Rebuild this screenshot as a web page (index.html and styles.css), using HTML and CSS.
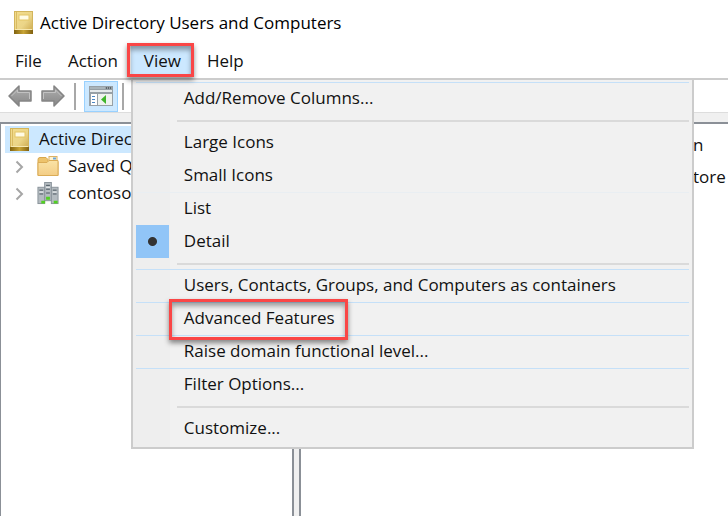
FILE: index.html
```html
<!DOCTYPE html>
<html lang="en">
<head>
<meta charset="utf-8">
<title>Active Directory Users and Computers</title>
<link rel="stylesheet" href="styles.css">
</head>
<body>
<svg class="defs" width="0" height="0" aria-hidden="true">
  <defs>
    <linearGradient id="gold" x1="0" y1="0" x2="1" y2="1">
      <stop offset="0" stop-color="#f3dc8c"/><stop offset=".55" stop-color="#ebd588"/><stop offset="1" stop-color="#c9a548"/>
    </linearGradient>
    <linearGradient id="spine" x1="0" y1="0" x2="1" y2="0">
      <stop offset="0" stop-color="#80620f"/><stop offset=".5" stop-color="#c9a536"/><stop offset="1" stop-color="#806010"/>
    </linearGradient>
    <linearGradient id="steel" x1="0" y1="0" x2="0" y2="1">
      <stop offset="0" stop-color="#b0b0b0"/><stop offset="1" stop-color="#868686"/>
    </linearGradient>
    <linearGradient id="paper" x1="0" y1="0" x2="0" y2="1">
      <stop offset="0" stop-color="#fae3a6"/><stop offset="1" stop-color="#f3cd86"/>
    </linearGradient>
    <symbol id="book" viewBox="0 0 19 23">
      <rect x=".5" y=".5" width="18" height="22" fill="url(#gold)" stroke="#d3b55c"/>
      <rect x="0" y="19" width="19" height="4" fill="url(#spine)"/>
      <path d="M1 18.5H18" stroke="#f7e8b0"/>
      <path d="M2.500 1V18" stroke="#d9bb62"/>
      <rect x="5" y="4" width="10" height="5" fill="#fffbe5" stroke="#e3c566"/>
    </symbol>
    <symbol id="arrow" viewBox="0 0 24 22">
      <path d="M1 11 11 1V6H23V16H11V21Z" fill="url(#steel)" stroke="#858585" stroke-width="1.5" stroke-linejoin="round"/>
      <path d="M3.500 11 9.500 5V7.500H21.500V14" fill="none" stroke="#c2c2c2"/>
    </symbol>
  </defs>
</svg>
<header class="titlebar">
  <svg class="book"><use href="#book"/></svg>
  <h1>Active Directory Users and Computers</h1>
</header>
<nav class="menubar">
  <button type="button">File</button>
  <button type="button">Action</button>
  <div class="open">
    <button type="button" aria-expanded="true">View</button>
    <span class="mark mark-view"></span>
    <ul class="dropdown">
      <li class="blue"><button type="button">Add/Remove Columns...</button></li>
      <li class="rule"></li>
      <li><button type="button">Large Icons</button></li>
      <li><button type="button">Small Icons</button></li>
      <li class="faint"><button type="button">List</button></li>
      <li class="checked"><button type="button">Detail</button></li>
      <li class="rule"></li>
      <li class="blue"><button type="button">Users, Contacts, Groups, and Computers as containers</button></li>
      <li class="blue"><button type="button">Advanced Features</button><span class="mark mark-item"></span></li>
      <li class="blue"><button type="button">Raise domain functional level...</button></li>
      <li class="blue"><button type="button">Filter Options...</button></li>
      <li class="rule"></li>
      <li><button type="button">Customize...</button></li>
    </ul>
  </div>
  <button type="button">Help</button>
</nav>
<div class="toolbar">
  <button type="button" aria-label="Back"><svg class="arrow"><use href="#arrow"/></svg></button>
  <button type="button" aria-label="Forward"><svg class="arrow flip"><use href="#arrow"/></svg></button>
  <span class="divider"></span>
  <button type="button" class="pressed" aria-label="Show console tree">
    <svg width="24" height="20" viewBox="0 0 24 20">
      <rect x="0" y="0" width="24" height="20" fill="#97a0a6"/>
      <rect x="1" y="1" width="15" height="2" fill="#a9b4ba"/>
      <path d="M17 2h1M19 2h1M21 2h1" stroke="#5c666c" stroke-width="2"/>
      <rect x="1" y="4" width="22" height="2" fill="#e5eaec"/>
      <rect x="2" y="8" width="6" height="11" fill="#fff"/>
      <rect x="9" y="8" width="14" height="11" fill="#eef2ee"/>
      <path d="M3 10.500h3M3 13.500h3M3 16.500h3" stroke="#4c88c4"/>
      <path d="M17 9v9l-5-4.500z" fill="#3fb52b"/>
    </svg>
  </button>
  <span class="divider"></span>
</div>
<main class="console">
  <ul class="tree">
    <li class="selected"><svg class="book"><use href="#book"/></svg><span>Active Direc</span></li>
    <li class="child">
      <svg class="chevron" viewBox="0 0 9 14"><path d="M1.500 1.500 7 7 1.500 12.500"/></svg>
      <svg class="node" viewBox="0 0 24 22">
        <path d="M2 20V4Q2 2 4 2H10L12 4V6H22V20Z" fill="#edc36c" stroke="#d8a84e"/>
        <rect x="13" y="1" width="8" height="5" fill="#fff3d2" stroke="#dcb265"/>
        <path d="M17 3h3" stroke="#6aa5d8" stroke-width="2"/>
        <path d="M2 20V7H11L13 5H22V20Z" fill="url(#paper)" stroke="#dbac56"/>
      </svg>
      <span>Saved Q</span>
    </li>
    <li class="child">
      <svg class="chevron" viewBox="0 0 9 14"><path d="M1.500 1.500 7 7 1.500 12.500"/></svg>
      <svg class="node" viewBox="0 0 24 24">
        <g fill="#b4bbc0" stroke="#89939a">
          <rect x="8.500" y=".5" width="7" height="19"/>
          <rect x="1.500" y="5.500" width="7" height="17"/>
          <rect x="15.500" y="5.500" width="7" height="17"/>
        </g>
        <path d="M10 3.500h4M10 7.500h4M10 11.500h4M3 8.500h4M3 12.500h4M17 8.500h4M17 12.500h4" stroke="#46535c"/>
        <path d="M10 5.500h4M3 10.500h4M17 10.500h4" stroke="#f2f5f6"/>
        <path d="M10 17h4M5 21h4M18 21h4" stroke="#52d022" stroke-width="3"/>
      </svg>
      <span>contoso</span>
    </li>
  </ul>
  <div class="splitter"></div>
  <section class="details">
    <p>n</p>
    <p>tore</p>
  </section>
</main>
</body>
</html>
```
FILE: styles.css
```css
* { box-sizing: border-box; }
html { height: 100%; }
body {
  display: flex;
  flex-direction: column;
  min-height: 100%;
  margin: 0;
  overflow: hidden;
  background: #f0f0f0;
  color: #111;
  font: 17px/24px "Open Sans", "Noto Sans", sans-serif;
}
.defs { position: absolute; }
button {
  padding: 0;
  border: 0;
  background: none;
  color: inherit;
  font: inherit;
}
ul { margin: 0; padding: 0; list-style: none; }
.book { width: 19px; height: 23px; flex: none; }

.titlebar {
  display: flex;
  align-items: center;
  gap: 7px;
  height: 45px;
  padding: 0 14px;
  background: #fff;
}
.titlebar h1 { margin: 0; font-size: 17px; font-weight: 400; color: #000; }

.menubar {
  display: flex;
  height: 35px;
  padding: 0 2px 1px;
  background: #fff;
  border-bottom: 2px solid #ccc;
}
.menubar > button, .open > button { height: 32px; padding: 0 13px; }
.open { position: relative; }
.open > button { background: #cce8ff; }

.mark {
  position: absolute;
  z-index: 2;
  border: 3px solid #fa4646;
  box-shadow: 0 3px 5px rgba(0, 0, 0, .45), inset 0 4px 5px rgba(0, 0, 0, .35);
  pointer-events: none;
}
.mark-view { inset: -2px 0 0 -4px; }
.mark-item { top: -4px; left: 33px; width: 179px; height: 41px; }

.dropdown {
  position: absolute;
  z-index: 1;
  top: 33px;
  left: 0;
  width: 563px;
  padding: 2px 3px;
  border: 2px solid #ccc;
  background: linear-gradient(90deg, #eee 37px, #f1f1f1 37px);
}
.dropdown li { position: relative; height: 33px; border-top: 1px solid transparent; }
.dropdown li.blue { border-color: #c5e0f8; }
.dropdown li.faint { border-color: #e9eef2; }
.dropdown li.rule {
  height: 11px;
  margin-left: 41px;
  border: 0;
  background: linear-gradient(#dadada, #dadada) 0 5px / 100% 2px no-repeat;
}
.dropdown button { display: block; width: 100%; height: 32px; padding: 0 0 2px 48px; text-align: left; }
.dropdown .checked::before {
  content: "";
  position: absolute;
  top: -1px;
  left: 0;
  width: 33px;
  height: 33px;
  background: radial-gradient(circle, #333 4px, #91c5f7 5px);
}

.toolbar {
  display: flex;
  align-items: center;
  height: 33px;
  padding: 0 8px;
  gap: 9px;
  background: #fff;
  border-bottom: 1px solid #ddd;
}
.toolbar button { display: flex; }
.arrow { width: 24px; height: 22px; }
.flip { transform: scaleX(-1); }
.divider { width: 2px; height: 27px; background: #a8a8a8; }
.toolbar .pressed {
  align-items: center;
  justify-content: center;
  width: 34px;
  height: 31px;
  margin: 0 -5px 0 -1px;
  border: 1px solid #99d1ff;
  background: #cce8ff;
}

.console { display: flex; flex: 1; margin-top: 9px; }
.tree {
  flex: 0 0 294px;
  padding: 2px 0 0 4px;
  border: 2px solid #8b9097;
  border-width: 2px 2px 0 1px;
  background: #fff;
}
.tree li { display: flex; align-items: center; height: 27px; }
.tree span { padding-bottom: 2px; }
.tree .selected { gap: 10px; padding-left: 5px; background: #cce8ff; }
.child { padding-left: 10px; }
.chevron { width: 9px; height: 14px; margin-right: 12px; fill: none; stroke: #a6a6a6; stroke-width: 2; }
.node { width: 24px; height: 23px; margin-right: 8px; }
.splitter { width: 5px; background: #f0f0f0; }
.details {
  flex: 1;
  padding: 5px 0 0 392px;
  border: solid #8b9097;
  border-width: 2px 0 0 2px;
  background: #fff;
}
.details p { margin: 0; line-height: 32px; }
```
